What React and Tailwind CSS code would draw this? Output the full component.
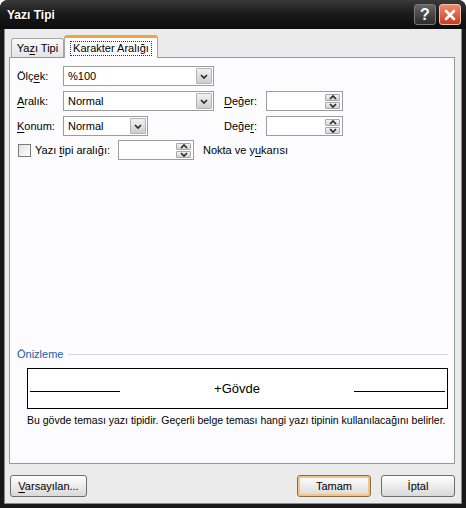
import React from 'react';

const Chevron = ({ up }) => (
  <svg width="8" height="5" viewBox="0 0 8 5">
    <polyline
      points={up ? '1,4 4,1 7,4' : '1,1 4,4 7,1'}
      fill="none"
      stroke="#2b2b2b"
      strokeWidth="1.7"
    />
  </svg>
);

const U = ({ children }) => <span className="underline underline-offset-2">{children}</span>;

const Select = ({ value, width }) => (
  <div className={`flex h-[20px] ${width} border border-[#9c9c9c] bg-white`}>
    <div className="flex-1 pl-[4px] leading-[18px]">{value}</div>
    <div className="m-px flex w-[16px] items-center justify-center rounded-[1px] border border-[#b4b4b4] bg-linear-to-b from-[#f2f2f2] to-[#cdcdcd]">
      <Chevron />
    </div>
  </div>
);

const Spinner = ({ width }) => (
  <div className={`flex h-[20px] ${width} border border-[#9c9c9c] bg-white`}>
    <div className="flex-1" />
    <div className="my-[2px] mr-[2px] flex w-[15px] flex-col gap-px">
      <div className="flex flex-1 items-center justify-center rounded-[1px] border border-[#a8a8a8] bg-linear-to-b from-[#f4f4f4] to-[#d2d2d2]">
        <Chevron up />
      </div>
      <div className="flex flex-1 items-center justify-center rounded-[1px] border border-[#a8a8a8] bg-linear-to-b from-[#f4f4f4] to-[#d2d2d2]">
        <Chevron />
      </div>
    </div>
  </div>
);

const Button = ({ children, width, focused }) => (
  <div
    className={`flex h-[22px] ${width} items-center justify-center rounded-[3px] border bg-linear-to-b from-white to-[#d9d9d9] ${
      focused ? 'border-[#8a6d45] shadow-[inset_0_0_0_2px_#f3c285]' : 'border-[#6e6e6e]'
    }`}
  >
    {children}
  </div>
);

export default function App() {
  return (
    <div className="flex h-[508px] w-[466px] flex-col overflow-hidden rounded-t-[8px] bg-[#181818] font-['Liberation_Sans',Arial,sans-serif] text-[11px] text-black">
      {/* title bar */}
      <div className="flex h-[29px] items-center bg-linear-to-b from-[#3a3a3a] via-[#1a1a1a] to-[#0c0c0c] pl-[7px] pr-[5px]">
        <span className="text-[12px] font-bold text-white [text-shadow:1px_1px_1px_#000]">Yazı Tipi</span>
        <div className="ml-auto flex gap-[3px]">
          <div className="flex h-[21px] w-[22px] items-center justify-center rounded-[3px] border border-[#7a7a7a] bg-linear-to-b from-[#666] to-[#2c2c2c] text-[16px] font-bold leading-none text-white">
            ?
          </div>
          <div className="flex h-[21px] w-[22px] items-center justify-center rounded-[3px] border border-[#f0c0b0] bg-linear-to-b from-[#ef8a6c] to-[#c83a1c]">
            <svg width="12" height="12" viewBox="0 0 12 12">
              <path d="M2 2 L10 10 M10 2 L2 10" stroke="white" strokeWidth="2.6" strokeLinecap="round" />
            </svg>
          </div>
        </div>
      </div>

      {/* body */}
      <div className="mx-[4px] mb-[4px] flex flex-1 flex-col border-x border-b border-[#8a8a8a] bg-[#ebebeb] pb-[6px] pl-[4px] pr-[6px] pt-[6px]">
        {/* tabs */}
        <div className="flex h-[22px] items-end pl-[2px]">
          <div className="flex h-[19px] w-[53px] items-center justify-center rounded-t-[3px] border border-b-0 border-[#a6a6a6] bg-linear-to-b from-[#fafafa] to-[#e4e4e4]">
            Ya<U>z</U>ı Tipi
          </div>
          <div className="relative z-10 -mb-px flex h-[23px] w-[94px] items-center justify-center rounded-t-[3px] border-x border-t-[3px] border-x-[#a6a6a6] border-t-[#f2a441] bg-[#fcfcfe]">
            <span className="border border-dotted border-[#333] px-[2px] leading-[13px]">Karakter Aralığı</span>
          </div>
        </div>

        {/* panel */}
        <div className="flex h-[407px] flex-col border border-[#919b9c] bg-[#fcfcfe] pt-[8px]">
          <div className="flex h-[20px] items-center pl-[7px]">
            <div className="w-[46px]">Ölç<U>e</U>k:</div>
            <Select value="%100" width="w-[151px]" />
          </div>
          <div className="mt-[5px] flex h-[20px] items-center pl-[7px]">
            <div className="w-[46px]"><U>A</U>ralık:</div>
            <Select value="Normal" width="w-[151px]" />
            <div className="ml-[10px] w-[42px]"><U>D</U>eğer:</div>
            <Spinner width="w-[77px]" />
          </div>
          <div className="mt-[5px] flex h-[20px] items-center pl-[7px]">
            <div className="w-[46px]"><U>K</U>onum:</div>
            <Select value="Normal" width="w-[85px]" />
            <div className="ml-[76px] w-[42px]">Değe<U>r</U>:</div>
            <Spinner width="w-[77px]" />
          </div>
          <div className="mt-[4px] flex h-[20px] items-center pl-[8px]">
            <div className="h-[13px] w-[13px] border border-[#7a7a7a] bg-linear-to-br from-[#e2e2e2] to-white" />
            <div className="ml-[4px] w-[83px]">Yazı <U>t</U>ipi aralığı:</div>
            <Spinner width="w-[76px]" />
            <div className="ml-[9px]">Nokta ve y<U>u</U>karısı</div>
          </div>

          {/* preview */}
          <div className="mt-auto flex h-[14px] items-center pl-[7px] pr-[6px]">
            <span className="text-[#1e5aa8]">Önizleme</span>
            <div className="ml-[5px] h-px flex-1 bg-[#d6d6d6]" />
          </div>
          <div className="ml-[17px] mt-[7px] flex h-[41px] w-[421px] border border-black bg-white">
            <div className="ml-[2px] mt-[22px] h-px w-[90px] bg-black" />
            <div className="flex-1 pt-[12px] text-center text-[13px] leading-[16px]">+Gövde</div>
            <div className="mr-[2px] mt-[22px] h-px w-[91px] bg-black" />
          </div>
          <div className="ml-[17px] mt-[4px] whitespace-nowrap text-[10.5px] leading-[14px]">
            Bu gövde teması yazı tipidir. Geçerli belge teması hangi yazı tipinin kullanılacağını belirler.
          </div>
          <div className="h-[36px]" />
        </div>

        {/* buttons */}
        <div className="mt-[11px] flex pl-[1px]">
          <Button width="w-[77px]">
            <span><U>V</U>arsayılan...</span>
          </Button>
          <div className="ml-auto flex gap-[10px]">
            <Button width="w-[74px]" focused>Tamam</Button>
            <Button width="w-[74px]">İptal</Button>
          </div>
        </div>
      </div>
    </div>
  );
}
